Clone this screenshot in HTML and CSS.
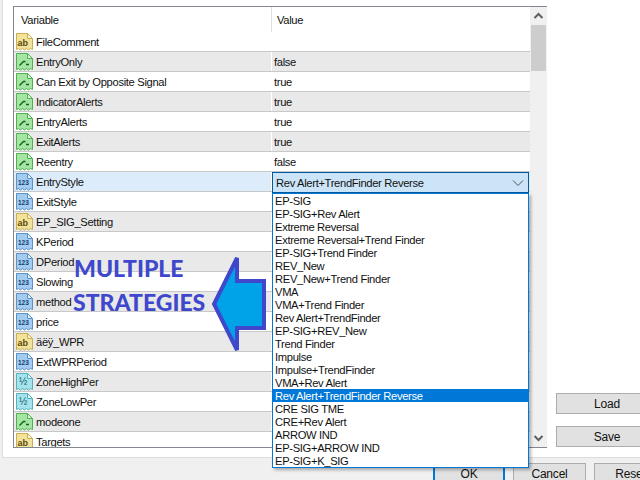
FILE: index.html
```html
<!DOCTYPE html>
<html lang="en">
<head>
<meta charset="utf-8">
<title>Inputs</title>
<link rel="stylesheet" href="styles.css">
</head>
<body>
<svg class="defs" width="0" height="0" aria-hidden="true">
  <symbol id="doc-ab" viewBox="0 0 17 18">
    <path d="M.5.5h11l5 5v11l-2-1-2 1.500-2-1.500-2 1.500-2-1.500-2 1.500-2-1.500-2 1z" fill="#f3e39a" stroke="#c9ae56"/>
    <path d="M11.500.5v5h5z" fill="#fdf6d2" stroke="#c9ae56"/>
    <text x="1.500" y="12.500" class="ic-ab">ab</text>
  </symbol>
  <symbol id="doc-bool" viewBox="0 0 17 18">
    <path d="M.5.5h11l5 5v11l-2-1-2 1.500-2-1.500-2 1.500-2-1.500-2 1.500-2-1.500-2 1z" fill="#a5e6a5" stroke="#4fb04f"/>
    <path d="M11.500.5v5h5z" fill="#dcf7dc" stroke="#4fb04f"/>
    <path d="M3.500 12.500l4-4h2M10 11.500h3" fill="none" stroke="#14601c" stroke-width="1.300"/>
  </symbol>
  <symbol id="doc-int" viewBox="0 0 17 18">
    <path d="M.5.5h11l5 5v11l-2-1-2 1.500-2-1.500-2 1.500-2-1.500-2 1.500-2-1.500-2 1z" fill="#a4ccf0" stroke="#5a92c8"/>
    <path d="M11.500.5v5h5z" fill="#e0effb" stroke="#5a92c8"/>
    <text x="2" y="12" class="ic-int">123</text>
  </symbol>
  <symbol id="doc-frac" viewBox="0 0 17 18">
    <path d="M.5.5h11l5 5v11l-2-1-2 1.500-2-1.500-2 1.500-2-1.500-2 1.500-2-1.500-2 1z" fill="#a5e4ec" stroke="#55b0bf"/>
    <path d="M11.500.5v5h5z" fill="#e0f7fa" stroke="#55b0bf"/>
    <text x="3" y="12" class="ic-frac">½</text>
  </symbol>
</svg>

<main class="panel">
  <section class="grid">
    <div class="table">
      <div class="head"><div class="h-name">Variable</div><div class="h-val">Value</div></div>
      <div class="rows">
        <div class="row"><svg class="ic"><use href="#doc-ab"/></svg><span class="name">FileComment</span><span class="val"></span></div>
        <div class="row alt"><svg class="ic"><use href="#doc-bool"/></svg><span class="name">EntryOnly</span><span class="val">false</span></div>
        <div class="row"><svg class="ic"><use href="#doc-bool"/></svg><span class="name">Can Exit by Opposite Signal</span><span class="val">true</span></div>
        <div class="row alt"><svg class="ic"><use href="#doc-bool"/></svg><span class="name">IndicatorAlerts</span><span class="val">true</span></div>
        <div class="row"><svg class="ic"><use href="#doc-bool"/></svg><span class="name">EntryAlerts</span><span class="val">true</span></div>
        <div class="row alt"><svg class="ic"><use href="#doc-bool"/></svg><span class="name">ExitAlerts</span><span class="val">true</span></div>
        <div class="row"><svg class="ic"><use href="#doc-bool"/></svg><span class="name">Reentry</span><span class="val">false</span></div>
        <div class="row active"><svg class="ic"><use href="#doc-int"/></svg><span class="name">EntryStyle</span><span class="val"></span></div>
        <div class="row"><svg class="ic"><use href="#doc-int"/></svg><span class="name">ExitStyle</span><span class="val"></span></div>
        <div class="row alt"><svg class="ic"><use href="#doc-ab"/></svg><span class="name">EP_SIG_Setting</span><span class="val"></span></div>
        <div class="row"><svg class="ic"><use href="#doc-int"/></svg><span class="name">KPeriod</span><span class="val"></span></div>
        <div class="row alt"><svg class="ic"><use href="#doc-int"/></svg><span class="name">DPeriod</span><span class="val"></span></div>
        <div class="row"><svg class="ic"><use href="#doc-int"/></svg><span class="name">Slowing</span><span class="val"></span></div>
        <div class="row alt"><svg class="ic"><use href="#doc-int"/></svg><span class="name">method</span><span class="val"></span></div>
        <div class="row"><svg class="ic"><use href="#doc-int"/></svg><span class="name">price</span><span class="val"></span></div>
        <div class="row alt"><svg class="ic"><use href="#doc-ab"/></svg><span class="name">äëÿ_WPR</span><span class="val"></span></div>
        <div class="row"><svg class="ic"><use href="#doc-int"/></svg><span class="name">ExtWPRPeriod</span><span class="val"></span></div>
        <div class="row alt"><svg class="ic"><use href="#doc-frac"/></svg><span class="name">ZoneHighPer</span><span class="val"></span></div>
        <div class="row"><svg class="ic"><use href="#doc-frac"/></svg><span class="name">ZoneLowPer</span><span class="val"></span></div>
        <div class="row alt"><svg class="ic"><use href="#doc-bool"/></svg><span class="name">modeone</span><span class="val"></span></div>
        <div class="row"><svg class="ic"><use href="#doc-ab"/></svg><span class="name">Targets</span><span class="val"></span></div>
      </div>
    </div>
    <div class="scrollbar">
      <svg class="sb-arrow" width="17" height="18"><path d="M4.500 11l4-4 4 4" fill="none" stroke="#606060" stroke-width="2"/></svg>
      <div class="thumb"></div>
      <div class="sb-track"></div>
      <svg class="sb-arrow" width="17" height="18"><path d="M4.500 7l4 4 4-4" fill="none" stroke="#606060" stroke-width="2"/></svg>
    </div>
  </section>
  <aside class="side">
    <button class="btn">Load</button>
    <button class="btn">Save</button>
  </aside>
</main>

<footer class="footer">
  <button class="btn foot primary">OK</button>
  <button class="btn foot">Cancel</button>
  <button class="btn foot">Reset</button>
</footer>

<div class="combo">
  <div class="combo-box">
    <span>Rev Alert+TrendFinder Reverse</span>
    <svg width="12" height="8"><path d="M1 1.500l5 5 5-5" fill="none" stroke="#555" stroke-width="1"/></svg>
  </div>
  <ul class="list">
    <li>EP-SIG</li>
    <li>EP-SIG+Rev Alert</li>
    <li>Extreme Reversal</li>
    <li>Extreme Reversal+Trend Finder</li>
    <li>EP-SIG+Trend Finder</li>
    <li>REV_New</li>
    <li>REV_New+Trend Finder</li>
    <li>VMA</li>
    <li>VMA+Trend Finder</li>
    <li>Rev Alert+TrendFinder</li>
    <li>EP-SIG+REV_New</li>
    <li>Trend Finder</li>
    <li>Impulse</li>
    <li>Impulse+TrendFinder</li>
    <li>VMA+Rev Alert</li>
    <li class="sel">Rev Alert+TrendFinder Reverse</li>
    <li>CRE SIG TME</li>
    <li>CRE+Rev Alert</li>
    <li>ARROW IND</li>
    <li>EP-SIG+ARROW IND</li>
    <li>EP-SIG+K_SIG</li>
  </ul>
</div>

<div class="promo">
  <div class="promo-l1">MULTIPLE</div>
  <div class="promo-l2">STRATEGIES</div>
</div>
<svg class="promo-arrow" width="60" height="102" viewBox="0 0 60 102">
  <path d="M27 3 4 49 27 95V73H54V26H27Z" fill="#00a2e8" stroke="#3f48cc" stroke-width="4"/>
</svg>
</body>
</html>
```

FILE: styles.css
```css
* { box-sizing: border-box; }
html, body { margin: 0; padding: 0; }
body {
  width: 640px;
  height: 480px;
  overflow: hidden;
  position: relative;
  background: #f0f0f0;
  font-family: "Liberation Sans", Arial, sans-serif;
  font-size: 11.2px;
  letter-spacing: -.33px;
  color: #111;
  display: flex;
  flex-direction: column;
}
.defs { display: none; }
.panel {
  height: 458px;
  margin-left: 2px;
  width: 638px;
  flex: none;
  background: #fff;
  border-left: 1px solid #dcdcdc;
  border-bottom: 1px solid #dcdcdc;
  padding: 6px 0 9px 10px;
  display: flex;
}
.grid {
  width: 534px;
  flex: none;
  border: 1px solid #828790;
  display: flex;
}
.table { width: 516px; flex: none; overflow: hidden; display: flex; flex-direction: column; }
.head { height: 25px; flex: none; display: flex; align-items: center; background: #fff; }
.h-name { width: 258px; padding-left: 7px; border-right: 1px solid #e0e0e0; height: 100%; display: flex; align-items: center; }
.h-val { padding-left: 5px; }
.rows { flex: 1; overflow: hidden; }
.row {
  height: 20px;
  display: flex;
  align-items: center;
  border-bottom: 1px solid #c8c8c8;
  background: #fff;
  padding-left: 2px;
  white-space: nowrap;
}
.row.alt { background: #e9e9e9; }
.row.active { background: #dcecfa; }
.ic { width: 17px; height: 18px; flex: none; margin-right: 3px; }
.ic-ab { font: 700 9px "Liberation Sans", sans-serif; letter-spacing: 0; fill: #5a4a10; }
.ic-int { font: 700 6.500px "Liberation Sans", sans-serif; letter-spacing: 0; fill: #123f70; }
.ic-frac { font: 400 10px "Liberation Sans", sans-serif; letter-spacing: 0; fill: #115a66; }
.name { width: 236px; flex: none; height: 100%; display: flex; align-items: center; border-right: 1px solid #fff; }
.val { padding-left: 2px; }
.scrollbar { width: 17px; flex: none; background: #f0f0f0; display: flex; flex-direction: column; }
.sb-arrow { flex: none; display: block; }
.thumb { height: 46px; flex: none; background: #cdcdcd; margin: 0 1px; }
.sb-track { flex: 1; }
.side {
  margin-left: 9px;
  width: 102px;
  flex: none;
  padding-bottom: 1px;
  display: flex;
  flex-direction: column;
  justify-content: flex-end;
  gap: 12px;
}
.btn {
  height: 21px;
  flex: none;
  width: 102px;
  padding: 0;
  font: inherit;
  font-size: 12px;
  letter-spacing: -.2px;
  color: #111;
  background: #e1e1e1;
  border: 1px solid #adadad;
}
.footer {
  flex: none;
  height: 30px;
  padding: 5px 0 0 433px;
  display: flex;
  gap: 8px;
}
.foot { width: 73px; }
.foot.primary { width: 72px; border: 2px solid #0078d7; }
.combo {
  position: absolute;
  left: 272px;
  top: 172px;
  width: 257px;
}
.combo-box {
  height: 21px;
  background: #cce4f7;
  border: 1px solid #005a9e;
  padding: 0 4px 0 3px;
  display: flex;
  align-items: center;
  justify-content: space-between;
}
.list {
  list-style: none;
  margin: 0;
  padding: 0;
  height: 275px;
  background: #fff;
  border: 1px solid #0078d7;
  box-shadow: 2px 2px 3px rgba(0, 0, 0, .3);
}
.list li {
  height: 13px;
  line-height: 14px;
  padding-left: 2px;
  white-space: nowrap;
}
.list .sel { background: #0078d7; color: #fff; }
.promo {
  position: absolute;
  left: 73px;
  top: 254px;
  font-family: Lato, "Liberation Sans", sans-serif;
  font-weight: 900;
  font-size: 23px;
  letter-spacing: 0;
  color: #3f48cc;
  white-space: nowrap;
}
.promo-l1 { height: 32px; line-height: 28px; padding-left: 1px; }
.promo-l2 { line-height: 32px; }
.promo-arrow { position: absolute; left: 210px; top: 255px; }
```
